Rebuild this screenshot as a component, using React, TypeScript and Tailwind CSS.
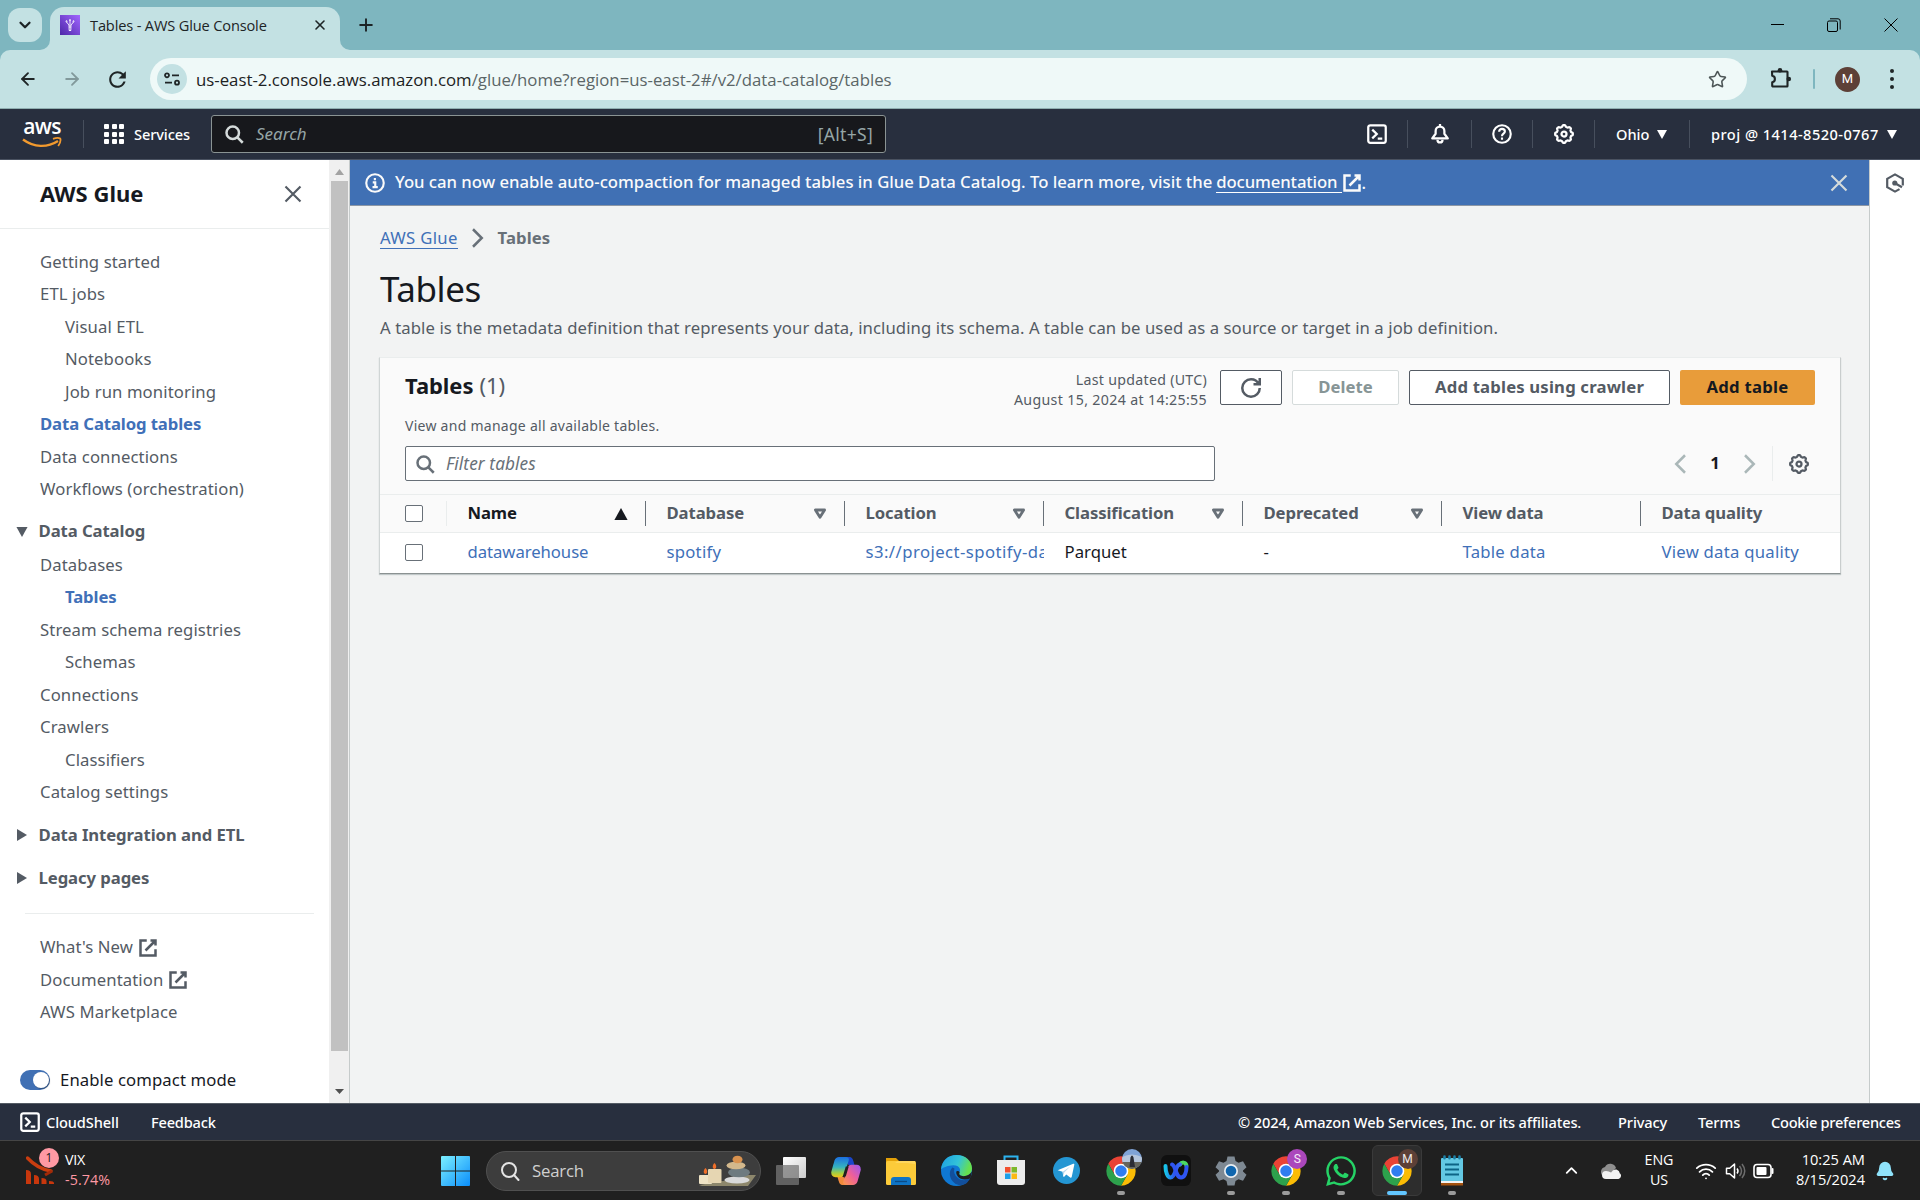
import React from "react";
import {
  ArrowLeft,
  ArrowRight,
  Bell,
  ChevronDown,
  ChevronUp,
  Plus,
  Star,
  Wifi,
  X,
} from "lucide-react";
import { FaWhatsapp } from "react-icons/fa";
import { MdRefresh } from "react-icons/md";

type IconProps = { className?: string };

const Stroke = ({
  className = "size-5",
  children,
  w = 2,
}: IconProps & { children: React.ReactNode; w?: number }) => (
  <svg viewBox="0 0 16 16" className={className + " shrink-0"} fill="none" stroke="currentColor" strokeWidth={w}>
    {children}
  </svg>
);

const External = ({ className }: IconProps) => (
  <Stroke className={className}>
    <path d="M10 2h4v4M6 10l8-8M14 9v5H2V2h5" />
  </Stroke>
);
const Search = ({ className }: IconProps) => (
  <Stroke className={className}>
    <circle cx="7" cy="7" r="5" />
    <path d="m15 15-4.500-4.500" />
  </Stroke>
);
const Close = ({ className }: IconProps) => (
  <Stroke className={className} w={1.7}>
    <path d="m2 2 12 12M14 2 2 14" />
  </Stroke>
);
const Terminal = ({ className }: IconProps) => (
  <Stroke className={className} w={1.8}>
    <rect x="1" y="1" width="14" height="14" rx="1.6" />
    <path d="m4.200 4.500 3.600 3.500-3.600 3.500M8.600 11.600h3.600" />
  </Stroke>
);
const Angle = ({ className, left }: IconProps & { left?: boolean }) => (
  <Stroke className={className}>
    <path d={left ? "m12 1-7 7 7 7" : "m4 1 7 7-7 7"} />
  </Stroke>
);
const gearPath =
  Array.from({ length: 96 }, (_, i) => {
    const a = (i / 96) * Math.PI * 2;
    const r = 6.45 + 0.65 * Math.tanh(2 * Math.cos(8 * a));
    return (i ? "L" : "M") + (8 + r * Math.cos(a)).toFixed(2) + " " + (8 + r * Math.sin(a)).toFixed(2);
  }).join("") + "Z";
const Gear = ({ className }: IconProps) => (
  <Stroke className={className} w={1.8}>
    <path d={gearPath} />
    <circle cx="8" cy="8" r="2" />
  </Stroke>
);
const Caret = ({ className = "" }: IconProps) => (
  <svg viewBox="0 0 10 9" className={className + " shrink-0"} fill="currentColor">
    <path d="M0 0h10L5 9z" />
  </svg>
);
const SortHollow = () => (
  <svg viewBox="0 0 14 12" className="h-3 w-3.5 shrink-0 text-[#687078]" fill="none" stroke="currentColor" strokeWidth="2.8">
    <path d="M2.400 2h9.200L7 9.200z" strokeLinejoin="round" />
  </svg>
);
const SortUp = () => (
  <svg viewBox="0 0 14 12" className="h-3 w-3.5 shrink-0 text-[#16191f]" fill="currentColor">
    <path d="M7 0 13.600 12H.400z" />
  </svg>
);

/* ---------- browser window ---------- */

const GlueFavicon = () => (
  <svg viewBox="0 0 20 20" className="size-5 shrink-0">
    <defs>
      <linearGradient id="glue" x1="0" y1="1" x2="1" y2="0">
        <stop offset="0" stopColor="#4d27a8" />
        <stop offset="1" stopColor="#a166ff" />
      </linearGradient>
    </defs>
    <rect width="20" height="20" fill="url(#glue)" />
    <g stroke="#fff" fill="none" strokeWidth=".9">
      <path d="M6.500 7 9 10l.200 5.500M13.500 7 11 10l-.200 5.500M10 5v8M9 15.500h2" />
      <circle cx="6.500" cy="6.300" r=".6" />
      <circle cx="13.500" cy="6.300" r=".6" />
      <circle cx="10" cy="5" r=".5" />
    </g>
  </svg>
);

const TabStrip = () => (
  <div className="flex h-[50px] bg-[#7eb6bf] text-[#1d2426]">
    <div className="mt-2 ml-2 flex h-[34px] w-[34px] items-center justify-center rounded-xl bg-[#c3e1e3]">
      <ChevronDown className="size-[18px]" strokeWidth={3} />
    </div>
    <svg viewBox="0 0 10 10" className="ml-[-2px] h-2.5 w-2.5 self-end">
      <path d="M0 10A10 10 0 0 0 10 0V10z" fill="#c3e1e3" />
    </svg>
    <div className="mt-[7px] flex w-[290px] items-center rounded-t-[14px] bg-[#c3e1e3] pb-[7px] pl-2.5">
      <GlueFavicon />
      <span className="mt-0.5 ml-2.5 w-[215px] font-['Open_Sans',sans-serif] text-[14.6px] tracking-[-0.15px] whitespace-nowrap">
        Tables - AWS Glue Console
      </span>
      <X className="ml-[7px] size-4" strokeWidth={2.4} />
    </div>
    <svg viewBox="0 0 10 10" className="h-2.5 w-2.5 self-end">
      <path d="M10 10A10 10 0 0 1 0 0V10z" fill="#c3e1e3" />
    </svg>
    <Plus className="mt-[15px] ml-[6px] size-5" strokeWidth={2.3} />
    <div className="ml-auto flex h-[49px] items-center text-black">
      <div className="h-px w-[13px] bg-black" />
      <svg viewBox="0 0 14 14" className="mr-[52px] ml-[43px] size-3.5" fill="none" stroke="currentColor">
        <rect x=".5" y="3" width="10" height="10.5" rx="1.5" />
        <path d="M3 .8h8a2.200 2.200 0 0 1 2.200 2.200v8.500" />
      </svg>
      <svg viewBox="0 0 14 14" className="mr-[22px] ml-[-9px] size-3.5" fill="none" stroke="currentColor">
        <path d="m.5.5 13 13M13.500.5l-13 13" />
      </svg>
    </div>
  </div>
);

const Toolbar = () => (
  <div className="bg-[#7eb6bf]">
    <div className="flex h-[59px] items-center rounded-t-[10px] border-b border-[#8faeb0] bg-[#c3e1e3] text-[#1f2526]">
      <ArrowLeft className="ml-[18px] size-5" strokeWidth={2.2} />
      <ArrowRight className="ml-6 size-5 text-[#82999b]" strokeWidth={2.2} />
      <MdRefresh className="ml-[23px] size-[25px]" />
      <div className="ml-5 flex h-[42px] w-[1597px] items-center rounded-full bg-[#eff9f8] pl-[7px]">
        <div className="flex size-[30px] items-center justify-center rounded-full bg-[#c3e1e3]">
          <svg viewBox="0 0 16 16" className="size-4" fill="none" stroke="currentColor" strokeWidth="1.8">
            <circle cx="3" cy="4.3" r="2" />
            <path d="M8 4.300h7M1 11.700h7" />
            <circle cx="13" cy="11.7" r="2" />
          </svg>
        </div>
        <span className="mt-px ml-[9px] font-['Open_Sans',sans-serif] text-[16.8px] tracking-[0px] whitespace-nowrap text-[#5b6667]">
          <span className="text-[#1c2223]">us-east-2.console.aws.amazon.com</span>
          /glue/home?region=us-east-2#/v2/data-catalog/tables
        </span>
        <Star className="mr-5 ml-auto size-[19px] text-[#4d5657]" strokeWidth={2} />
      </div>
      <svg viewBox="0 0 22 22" className="mb-0.5 ml-[23px] size-[22px] shrink-0">
        <path
          d="M2 4.500h15a.5.5 0 0 1 .5.5v14a.5.5 0 0 1-.5.5H3a.8.8 0 0 1-.8-.8v-3.500c3.600-.5 3.600-5.900 0-6.400z"
          fill="none"
          stroke="currentColor"
          strokeWidth="2.1"
          strokeLinejoin="round"
        />
        <circle cx="10" cy="3.200" r="2.300" fill="currentColor" />
        <circle cx="18.800" cy="12" r="2.300" fill="currentColor" />
      </svg>
      <div className="ml-[21px] h-5 w-0.5 rounded bg-[#7eb6bf]" />
      <div className="ml-5 flex size-[25px] items-center justify-center rounded-full bg-[#5d4037] font-[Roboto,sans-serif] text-[13px] text-white">
        M
      </div>
      <div className="ml-[30px] flex flex-col gap-1">
        <i className="size-1 rounded-full bg-current" />
        <i className="size-1 rounded-full bg-current" />
        <i className="size-1 rounded-full bg-current" />
      </div>
    </div>
  </div>
);

/* ---------- console header ---------- */

const Divider = ({ className = "" }: IconProps) => <div className={"h-7 w-px shrink-0 bg-[#474f5d] " + className} />;

const ConsoleHeader = () => (
  <div className="flex h-[51px] items-center border-b border-[#4a5261] bg-[#282f3e] text-white">
    <div className="ml-[22px] flex w-10 flex-col items-center">
      <span className="h-[17px] font-['Open_Sans',sans-serif] text-[21px] leading-[13px] font-semibold tracking-[-0.6px]">
        aws
      </span>
      <svg viewBox="0 0 40 12" className="h-3 w-10" fill="none" stroke="#f29a2e" strokeWidth="2.4">
        <path d="M1 2.500c11 8 24 8.500 35 1.500" />
        <path d="M31 1.800c3-1 6-1 7.200-.3.700 1.500 0 4.500-2 7.500" strokeWidth="1.800" />
      </svg>
    </div>
    <Divider className="ml-[21px]" />
    <div className="ml-5 grid grid-cols-3 gap-x-[2.5px] gap-y-[2.5px]">
      {Array.from({ length: 9 }, (_, i) => (
        <i key={i} className="size-[5px] rounded-[1px] bg-white" />
      ))}
    </div>
    <span className="mt-0.5 ml-2.5 w-[77px] text-[14.6px] font-medium tracking-[-0.1px]">Services</span>
    <div className="flex h-[38px] w-[675px] items-center rounded-[3px] border border-[#8a9393] bg-[#17181c] px-3">
      <Search className="size-5 text-[#d5dbdb]" />
      <span className="ml-3 text-[17px] tracking-[0px] text-[#95a5a6] italic">Search</span>
      <span className="ml-auto text-[17.5px] tracking-[0.3px] text-[#95a5a6]">[Alt+S]</span>
    </div>
    <Terminal className="ml-[481px] size-5" />
    <Divider className="ml-5" />
    <Stroke className="ml-[22px] size-5" w={1.8}>
      <path d="M1.800 11.500h12.400L11.500 7.800V5.500a3.500 3.500 0 0 0-7 0v2.300z" strokeLinejoin="round" />
      <path d="M8 2V0M6 12.500c0 3 4 3 4 0" />
    </Stroke>
    <Divider className="ml-[21px]" />
    <Stroke className="ml-5 size-5" w={1.7}>
      <circle cx="8" cy="8" r="7" />
      <path d="M5.700 6.200C5.700 3 10.300 3.200 10.300 6c0 1.800-2.300 1.700-2.300 3.700M8 10.800v1.700" />
    </Stroke>
    <Divider className="ml-5" />
    <Gear className="ml-[21px] size-5" />
    <Divider className="ml-5" />
    <span className="mt-0.5 ml-[21px] w-[41px] text-[14.6px] font-medium">Ohio</span>
    <Caret className="h-[9px] w-2.5" />
    <Divider className="ml-[22px]" />
    <span className="mt-0.5 ml-[21px] w-[176px] text-[14.6px] font-medium tracking-[0.46px] whitespace-nowrap">
      proj @ 1414-8520-0767
    </span>
    <Caret className="h-[9px] w-2.5" />
  </div>
);

/* ---------- side navigation ---------- */

type Item = { label: string; sub?: boolean; active?: boolean; ext?: boolean };

const topItems: Item[] = [
  { label: "Getting started" },
  { label: "ETL jobs" },
  { label: "Visual ETL", sub: true },
  { label: "Notebooks", sub: true },
  { label: "Job run monitoring", sub: true },
  { label: "Data Catalog tables", active: true },
  { label: "Data connections" },
  { label: "Workflows (orchestration)" },
];
const catalogItems: Item[] = [
  { label: "Databases" },
  { label: "Tables", sub: true, active: true },
  { label: "Stream schema registries" },
  { label: "Schemas", sub: true },
  { label: "Connections" },
  { label: "Crawlers" },
  { label: "Classifiers", sub: true },
  { label: "Catalog settings" },
];
const linkItems: Item[] = [
  { label: "What's New", ext: true },
  { label: "Documentation", ext: true },
  { label: "AWS Marketplace" },
];

const NavList = ({ items }: { items: Item[] }) => (
  <ul>
    {items.map((it) => (
      <li
        key={it.label}
        className={
          "flex h-[32.5px] items-center " +
          (it.sub ? "pl-[65px] " : "pl-10 ") +
          (it.active ? "font-bold tracking-[-0.1px] text-[#4070b8]" : "text-[#545b64]")
        }
      >
        {it.label}
        {it.ext && <External className="mt-0.5 ml-[5px] size-5" />}
      </li>
    ))}
  </ul>
);

const Section = ({ label, open }: { label: string; open?: boolean }) => (
  <div className="flex h-[43px] items-center font-bold tracking-[-0.08px] text-[#545b64]">
    <span className="flex w-[38.5px] pl-4">
      {open ? (
        <Caret className="mt-0.5 h-2.5 w-3" />
      ) : (
        <svg viewBox="0 0 10 12" className="ml-px h-3 w-2.5" fill="currentColor">
          <path d="M0 0v12l10-6z" />
        </svg>
      )}
    </span>
    {label}
  </div>
);

const Sidebar = () => (
  <div className="flex w-[350px] shrink-0 border-r border-[#c6cbcb] bg-white text-[16.7px] tracking-[0.1px]">
    <div className="flex w-[329px] flex-col">
      <div className="flex h-[69px] items-center justify-between border-b border-[#eaeded] pr-[26px] pl-10">
        <span className="mb-0.5 text-[22px] font-bold tracking-[0px] text-[#16191f]">AWS Glue</span>
        <Close className="size-5 text-[#545b64]" />
      </div>
      <div className="pt-4">
        <NavList items={topItems} />
        <div className="pt-[4.5px]">
          <Section label="Data Catalog" open />
        </div>
        <div className="mt-[-4.5px] pb-[5.5px]">
          <NavList items={catalogItems} />
        </div>
        <Section label="Data Integration and ETL" />
        <Section label="Legacy pages" />
        <div className="mt-[13px] mr-[15px] mb-[17px] ml-[25px] h-px bg-[#eaeded]" />
        <NavList items={linkItems} />
      </div>
      <div className="mt-auto mb-[9px] flex items-center pl-5">
        <div className="flex h-5 w-[30px] items-center justify-end rounded-full bg-[#4070b4] px-px">
          <div className="size-4 rounded-full bg-white shadow-[1px_1px_1px_rgba(0,0,0,0.3)]" />
        </div>
        <span className="mb-0.5 ml-2.5 text-[#16191f]">Enable compact mode</span>
      </div>
    </div>
    <div className="flex w-5 flex-col items-center bg-[#f0f0f0]">
      <svg viewBox="0 0 9 6" className="mt-[9px] mb-[6px] h-1.5 w-[9px]" fill="#a3a3a3">
        <path d="M4.500 0 9 6H0z" />
      </svg>
      <div className="ml-px h-[870px] w-[17px] bg-[#c1c1c1]" />
      <svg viewBox="0 0 9 5" className="mt-[38px] h-[5px] w-[9px]" fill="#505050">
        <path d="M4.500 5 9 0H0z" />
      </svg>
    </div>
  </div>
);

/* ---------- main content ---------- */

const Banner = () => (
  <div className="flex h-[46px] items-center border-b border-[#8d97a5] bg-[#4070b4] pr-5 pl-[15px] text-[16.7px] font-medium text-[#fafafa]">
    <Stroke className="size-5" w={1.7}>
      <circle cx="8" cy="8" r="7" />
      <path d="M6 11.300h4.200M6.200 7.500h2v4M7.900 4v1.800" />
    </Stroke>
    <span className="mb-0.5 ml-[10px] tracking-[-0.01px] whitespace-nowrap">
      You can now enable auto-compaction for managed tables in Glue Data Catalog. To learn more, visit the
    </span>
    <span className="ml-1 border-b border-white pr-1 leading-5 tracking-[-0.1px]">documentation</span>
    <External className="size-5" />
    <span>.</span>
    <Close className="ml-auto size-5 text-[#d5dbdb]" />
  </div>
);

const columns = [
  { label: "Name", cell: "datawarehouse", link: true, sort: "up", track: "tracking-[-0.05px]" },
  { label: "Database", cell: "spotify", link: true, sort: "none", track: "tracking-[0.25px]" },
  { label: "Location", cell: "s3://project-spotify-da", link: true, sort: "none", track: "tracking-[0.45px]" },
  { label: "Classification", cell: "Parquet", sort: "none", track: "tracking-[0.05px]" },
  { label: "Deprecated", cell: "-", sort: "none", track: "" },
  { label: "View data", cell: "Table data", link: true, track: "tracking-[0.25px]" },
  { label: "Data quality", cell: "View data quality", link: true, track: "tracking-[0.25px]" },
];

const Checkbox = () => <div className="ml-[25px] size-[17.5px] shrink-0 rounded-[2px] border border-[#687078] bg-white" />;

const gridCols = "grid grid-cols-[67px_199px_199px_199px_199px_199px_199px_1fr]";

const TablesCard = () => (
  <div className="mt-[17px] ml-[-1px] h-[217px] w-[1462px] border border-t-[#eaeded] border-r-[#c9cdcd] border-b-[#8b9292] border-l-[#d0d5d5] bg-white shadow-[0_1px_1px_rgba(0,28,36,0.2)]">
    <div className="h-[136px] bg-[#fafafa] pr-[25px] pl-[25px]">
      <div className="flex h-[88px] pt-3">
        <div>
          <div className="mt-[-1px] flex h-8 items-center text-[22px] font-bold tracking-[-0.05px] text-[#16191f]">
            Tables<span className="ml-1.5 font-normal text-[#545b64]">(1)</span>
          </div>
          <div className="mt-[15px] text-[14px] leading-5 tracking-[0.27px] text-[#545b64]">
            View and manage all available tables.
          </div>
        </div>
        <div className="ml-auto flex text-[16.7px] font-bold text-[#545b64]">
          <div className="text-right text-[14.2px] leading-5 font-normal tracking-[0.28px]">
            Last updated (UTC)
            <br />
            <span className="tracking-[0.34px]">August 15, 2024 at 14:25:55</span>
          </div>
          <div className="ml-[13px] flex h-[35px] w-[62px] items-center justify-center rounded-[2px] border border-[#545b64] bg-white">
            <Stroke className="size-5">
              <path d="M10 5h5V0M15 8c0 3.866-3.134 7-7 7s-7-3.134-7-7 3.134-7 7-7c2.790 0 5.200 1.633 6.327 4" />
            </Stroke>
          </div>
          <div className="ml-2.5 flex h-[35px] w-[107px] items-center justify-center rounded-[2px] border border-[#d5dbdb] bg-white pb-0.5 text-[#879596]">
            Delete
          </div>
          <div className="ml-2.5 flex h-[35px] w-[261px] items-center justify-center rounded-[2px] border border-[#545b64] bg-white pb-0.5 tracking-[0.18px]">
            Add tables using crawler
          </div>
          <div className="ml-2.5 flex h-[35px] w-[135px] items-center justify-center rounded-[2px] bg-[#e89c3a] pb-0.5 tracking-[0.25px] text-[#16191f]">
            Add table
          </div>
        </div>
      </div>
      <div className="flex h-[35px] items-center">
        <div className="flex h-[35px] w-[810px] items-center rounded-[2px] border border-[#687078] bg-white pl-[9px]">
          <Search className="size-5 text-[#687078]" />
          <span className="ml-[11px] text-[17.2px] tracking-[0.1px] text-[#687078] italic">Filter tables</span>
        </div>
        <Angle left className="ml-auto size-5 text-[#aab7b8]" />
        <span className="mb-0.5 w-[50px] text-center text-[16.7px] font-bold text-[#16191f]">1</span>
        <Angle className="size-5 text-[#aab7b8]" />
        <div className="ml-3 h-[35px] w-px bg-[#eaeded]" />
        <Gear className="mr-[6px] ml-4 size-5 text-[#545b64]" />
      </div>
    </div>
    <div className={gridCols + " h-[39px] border-t border-b border-[#eaeded] bg-[#fafafa]"}>
      <div className="flex items-center justify-between">
        <Checkbox />
        <div className="h-[25px] w-px bg-[#eaeded]" />
      </div>
      {columns.map((c, i) => (
        <div key={c.label} className="flex items-center justify-between">
          <span
            className={
              "pb-0.5 pl-[20.5px] text-[16.7px] font-bold tracking-[-0.1px] " +
              (i === 0 ? "text-[#16191f]" : "text-[#545b64]")
            }
          >
            {c.label}
          </span>
          <div className="flex items-center">
            {c.sort === "up" && <SortUp />}
            {c.sort === "none" && <SortHollow />}
            {i < 6 && <div className="ml-[17px] h-[25px] w-px bg-[#687078]" />}
          </div>
        </div>
      ))}
    </div>
    <div className={gridCols + " h-10"}>
      <div className="flex items-center pb-px">
        <Checkbox />
      </div>
      {columns.map((c) => (
        <div key={c.label} className="flex min-w-0 items-center overflow-hidden pb-[3px]">
          <span
            className={
              "pl-[20.5px] text-[16.7px] whitespace-nowrap " + c.track + " " + (c.link ? "text-[#4070b8]" : "text-[#16191f]")
            }
          >
            {c.cell}
          </span>
        </div>
      ))}
    </div>
  </div>
);

const Main = () => (
  <div className="flex w-[1519px] flex-col bg-[#f2f3f3]">
    <Banner />
    <div className="pl-[30px]">
      <div className="mt-5 flex h-6 items-center text-[16.7px]">
        <span className="border-b border-[#4070b8] leading-[21px] tracking-[0.3px] text-[#4070b8]">AWS Glue</span>
        <Angle className="ml-[10px] size-5 text-[#687078]" />
        <span className="ml-2.5 font-bold tracking-[0.1px] text-[#687078]">Tables</span>
      </div>
      <h1 className="mt-[19px] h-10 text-[35px] leading-10 tracking-[-0.4px] text-[#16191f]">Tables</h1>
      <p className="mt-[7px] text-[16.7px] leading-6 tracking-[0.085px] whitespace-nowrap text-[#545b64]">
        A table is the metadata definition that represents your data, including its schema. A table can be used as a source or
        target in a job definition.
      </p>
      <TablesCard />
    </div>
  </div>
);

const RightRail = () => (
  <div className="flex flex-1 justify-center border-l border-[#c6cbcb] bg-white pt-[13px]">
    <svg viewBox="0 0 20 20" className="size-5 text-[#545b64]" fill="none" stroke="currentColor" strokeWidth="2.2">
      <path d="M17.800 12.500V5.800L10 1.400 2.200 5.800v8.400L10 18.600l4.500-2.500" />
      <circle cx="9.800" cy="10" r="2.600" fill="currentColor" stroke="none" />
      <path d="m10.500 10.500 6.500 3.700" />
    </svg>
  </div>
);

const ConsoleFooter = () => (
  <div className="flex h-[38px] items-center border-t border-b border-t-[#545b64] border-b-[#454545] bg-[#282f3e] text-[14.6px] font-medium tracking-[-0.1px] text-white">
    <Terminal className="ml-5 size-5" />
    <span className="mt-0.5 ml-1.5 w-[105px]">CloudShell</span>
    <span className="mt-0.5 tracking-[-0.2px]">Feedback</span>
    <span className="mt-0.5 ml-auto w-[380px] tracking-[-0.12px] whitespace-nowrap">
      © 2024, Amazon Web Services, Inc. or its affiliates.
    </span>
    <span className="mt-0.5 w-20">Privacy</span>
    <span className="mt-0.5 w-[73px]">Terms</span>
    <span className="mt-0.5 w-[149px] tracking-[-0.26px] whitespace-nowrap">Cookie preferences</span>
  </div>
);

/* ---------- taskbar ---------- */

const ChromeLogo = () => (
  <svg viewBox="0 0 48 48" className="size-[32px]">
    <path d="M4.950 13A22 22 0 0 1 43.050 13H24L14.470 29.500z" fill="#ea4335" />
    <path d="M43.050 13A22 22 0 0 1 24 46l9.530-16.500L24 13z" fill="#fbbc05" />
    <path d="M24 46A22 22 0 0 1 4.950 13l9.520 16.500h19.060z" fill="#2da14c" />
    <circle cx="24" cy="24" r="11" fill="#fff" />
    <circle cx="24" cy="24" r="8.600" fill="#2f7df0" />
  </svg>
);

const TaskApp = ({
  children,
  running,
  active,
  badge,
}: {
  children: React.ReactNode;
  running?: boolean;
  active?: boolean;
  badge?: React.ReactNode;
}) => (
  <div
    className={
      "relative flex h-[51px] w-[50px] shrink-0 items-center justify-center rounded-md " +
      (active ? "border border-[#3a3a3a] bg-[#2d2d2d]" : "border border-transparent")
    }
  >
    {children}
    {badge && <div className="absolute top-[3px] left-[25px] size-5">{badge}</div>}
    {active && <div className="absolute bottom-0 h-1 w-5 rounded-full bg-[#62c6ff]" />}
    {running && <div className="absolute bottom-0 h-1 w-2 rounded-full bg-[#9b9b9b]" />}
  </div>
);

const Letter = ({ c, className }: { c: string; className: string }) => (
  <div className={"flex size-5 items-center justify-center rounded-full font-[Roboto,sans-serif] text-[12px] text-white/90 " + className}>
    {c}
  </div>
);

const WindowsLogo = () => (
  <svg viewBox="0 0 29 30" className="h-[30px] w-[29px] shrink-0">
    <defs>
      <linearGradient id="win" x1="0" y1="0" x2="1" y2="1">
        <stop offset="0" stopColor="#7cf0ff" />
        <stop offset="1" stopColor="#0a8dfb" />
      </linearGradient>
    </defs>
    <path
      d="M0 1a1 1 0 0 1 1-1h13v14.500H0zM15 0h13a1 1 0 0 1 1 1v13.500H15zM0 15.500h14V30H1a1 1 0 0 1-1-1zM15 15.500h14V29a1 1 0 0 1-1 1H15z"
      fill="url(#win)"
    />
  </svg>
);

const Stones = () => (
  <svg viewBox="0 0 57 32" className="h-8 w-[57px]">
    <path d="M0 30 30 25l6-5 21 0-8 11H3z" fill="#8d876c" />
    <rect x="0" y="20" width="13" height="9" rx="1" fill="#efe4c6" />
    <rect x="9" y="14" width="13.500" height="14" rx="1" fill="#e6d6b2" />
    <path d="M6.500 13c3 3 1.500 6 0 6s-3-3 0-6zM15.500 8c3 3 1.500 6 0 6s-3-3 0-6z" fill="#f0702a" />
    <ellipse cx="38" cy="25" rx="12.500" ry="3.500" fill="#d9dadb" />
    <ellipse cx="40" cy="17.500" rx="11" ry="4.800" fill="#6e7b80" />
    <ellipse cx="37" cy="10.500" rx="9.500" ry="3.800" fill="#d3b88c" />
    <ellipse cx="38.500" cy="4.500" rx="5" ry="3.800" fill="#d9924f" />
  </svg>
);

const Taskbar = () => (
  <div className="flex h-[59px] items-center bg-[#202020] font-['Open_Sans',sans-serif] text-white">
    <div className="relative mb-0.5 ml-[26px] h-7 w-[39px]">
      <svg viewBox="0 0 28 28" className="size-7" fill="none">
        <path d="M1.500 2C8 9 15 13.500 25 15" stroke="#c93d10" strokeWidth="3.400" strokeLinecap="round" />
        <path d="m19 19 7-4" stroke="#a32a08" strokeWidth="3" />
        <path d="M0 14q5 0 5 4v10H0zM8 19q5 0 5 4v5H8zM15.500 22q5 0 5 3v3h-5zM23 25q5 0 5 2v1h-5z" fill="#c8370d" />
      </svg>
      <div className="absolute top-[-8px] left-[13px] flex size-5 items-center justify-center rounded-full bg-[#ff99a4] text-[12px] text-[#202020]">
        1
      </div>
    </div>
    <div className="mb-0.5 w-[376px] text-[14.3px] leading-5 tracking-[-0.3px]">
      VIX
      <div className="tracking-[0.05px] text-[#ff99a4]">-5.74%</div>
    </div>
    <WindowsLogo />
    <div className="ml-4 flex h-10 w-[275px] shrink-0 items-center rounded-full border border-[#505050] bg-[#3d3d3d] pr-1 pl-[13px]">
      <svg viewBox="0 0 20 20" className="size-5" fill="none" stroke="#e4e4e4" strokeWidth="2">
        <circle cx="9" cy="9" r="7" />
        <path d="m14 14 4.500 5" strokeLinecap="round" />
      </svg>
      <span className="ml-3 text-[16.8px] tracking-[-0.2px] text-[#d0d0d0]">Search</span>
      <div className="ml-auto">
        <Stones />
      </div>
    </div>
    <div className="ml-[5px] flex shrink-0 items-center gap-[5.05px]">
      <TaskApp>
        <svg viewBox="0 0 30 30" className="size-[30px]">
          <defs>
            <linearGradient id="tv" x1="0" y1="0" x2="1" y2="1">
              <stop offset="0" stopColor="#fff" />
              <stop offset="1" stopColor="#ccc" />
            </linearGradient>
          </defs>
          <rect x="7" y="1" width="23" height="21" rx="1" fill="url(#tv)" />
          <rect x="0" y="9" width="23" height="20" rx="1" fill="#777" fillOpacity=".75" />
        </svg>
      </TaskApp>
      <TaskApp>
        <svg viewBox="0 0 30 30" className="size-[30px]">
          <defs>
            <linearGradient id="cpa" x1="0" y1="0" x2="0" y2="1">
              <stop offset="0" stopColor="#1b6fe0" />
              <stop offset=".5" stopColor="#35b3c0" />
              <stop offset=".8" stopColor="#a6cf3f" />
              <stop offset="1" stopColor="#f0c419" />
            </linearGradient>
            <linearGradient id="cpb" x1="1" y1="0" x2="0" y2="1">
              <stop offset="0" stopColor="#9a57f2" />
              <stop offset=".5" stopColor="#ee5f9a" />
              <stop offset="1" stopColor="#fb9a4a" />
            </linearGradient>
          </defs>
          <path d="M11 1h7c3 0 3.500 1.500 4.500 4.500l1 3.500h-6z" fill="#1b45c9" />
          <path d="M19 29h-7c-3 0-3.500-1.500-4.500-4.500l-1-3.500h6z" fill="#f08a3c" />
          <path d="M8 1h7c2.500 0 3.200 1.500 2.700 3.500L13.500 18c-.700 2-2 3.200-4 3.200H4.500C.8 21.200-.3 18 .5 15l3-10.500C4.200 2.300 6 1 8 1z" fill="url(#cpa)" />
          <path d="M22 29h-7c-2.500 0-3.200-1.500-2.700-3.500L16.500 12c.700-2 2-3.200 4-3.200h5c3.700 0 4.800 3.200 4 6.200l-3 10.500c-.700 2.200-2.500 3.500-4.500 3.500z" fill="url(#cpb)" />
          <path d="M15.500 11.500h.9L14 19.500h-.9z" stroke="#202020" strokeWidth="2" />
        </svg>
      </TaskApp>
      <TaskApp>
        <svg viewBox="0 0 30 28" className="h-7 w-[30px]">
          <path d="M0 1h10l3 3v6H0z" fill="#e2a008" />
          <rect y="4" width="30" height="24" rx="1.500" fill="#fccb3a" />
          <path d="M12 4h17v3l-8-1H9z" fill="#ffd75e" />
          <path d="M5 28v-5a3 3 0 0 1 3-3h14a3 3 0 0 1 3 3v5z" fill="#0f74c5" />
          <path d="M9 24.500h12" stroke="#0a4a85" strokeWidth="1.300" />
        </svg>
      </TaskApp>
      <TaskApp>
        <svg viewBox="0 0 30 30" className="size-[31px]">
          <defs>
            <linearGradient id="eda" x1="0" y1="0" x2="1" y2=".3">
              <stop offset="0" stopColor="#1b9de2" />
              <stop offset=".6" stopColor="#33c3d8" />
              <stop offset="1" stopColor="#66e04f" />
            </linearGradient>
          </defs>
          <circle cx="15" cy="15" r="15" fill="#0f78d4" />
          <path d="M0 14C1 5 7 0 15 0c9 0 15 6 15 13 0 5-4 7.500-8 7.500-3.500 0-5.500-1.500-4-3.500 1.300-2 .500-7-6-7C6 10 1 13 0 14z" fill="url(#eda)" />
          <path d="M11 12c-4 4-3 11 2 15 3 2.500 8 3 12 0l3-4c-4 2-9 2-12-1-3-2.500-4-6-3-9z" fill="#124f9c" />
          <path d="M28.500 22.500C24 24.500 19 24 16.500 21c-1.500-1.800-2-3.500-1.700-5 .7-1 3.200-.5 3.200 1-1 2 .5 3.500 4 3.500 3 0 6-1.500 8-4.500z" fill="#202020" />
        </svg>
      </TaskApp>
      <TaskApp>
        <svg viewBox="0 0 30 31" className="h-[31px] w-[30px]">
          <path d="M8.500 8V1.500h13V8" fill="none" stroke="#2cb3ef" strokeWidth="2" />
          <path d="M1 5h28v22a3 3 0 0 1-3 3H4a3 3 0 0 1-3-3z" fill="#ececec" />
          <path d="M9 12h5.500v5.500H9z" fill="#f1502f" />
          <path d="M15.500 12H21v5.500h-5.500z" fill="#7db82a" />
          <path d="M9 18.500h5.500V24H9z" fill="#1c9fe8" />
          <path d="M15.500 18.500H21V24h-5.500z" fill="#fbb813" />
        </svg>
      </TaskApp>
      <TaskApp>
        <svg viewBox="0 0 26 26" className="size-[27px]">
          <circle cx="13" cy="13" r="13" fill="#2496d3" />
          <path d="M4.500 12.800 19.500 6.500c.700-.2 1.200.2 1 1l-2.500 11.700c-.200.800-.800 1-1.400.600l-3.800-2.900-2 2c-.500.400-.900.200-1-.400l-.600-4.200z" fill="#fff" />
          <path d="m9.300 14.200 7.300-5-5.800 5.800-.700 3.400z" fill="#b9d9ee" />
        </svg>
      </TaskApp>
      <TaskApp
        running
        badge={
          <svg viewBox="0 0 20 20" className="size-5">
            <clipPath id="av">
              <circle cx="10" cy="10" r="10" />
            </clipPath>
            <g clipPath="url(#av)">
              <path d="M0 0h20v20H0z" fill="#7fa3d6" />
              <path d="M0 8q10-5 20 0v5H0z" fill="#b5c6dd" />
              <path d="M0 13h20v7H0z" fill="#66655c" />
              <path d="M8.500 8.500q1.500-4 3 0L13 18H7.500z" fill="#2b2c34" />
            </g>
          </svg>
        }
      >
        <ChromeLogo />
      </TaskApp>
      <TaskApp>
        <svg viewBox="0 0 30 31" className="h-[31px] w-[30px]">
          <defs>
            <linearGradient id="wx" x1="0" y1="0" x2="1" y2="0">
              <stop offset="0" stopColor="#17c4e8" />
              <stop offset=".6" stopColor="#2d55f0" />
              <stop offset="1" stopColor="#3b6cf5" />
            </linearGradient>
          </defs>
          <rect width="30" height="31" rx="6" fill="#101010" />
          <g fill="none" strokeWidth="4" strokeLinecap="round">
            <path d="M19 9.500c1.500-2.500 6-3 6.500 1.500" stroke="#4bd865" />
            <path d="M4.500 11c0 6 2 11.500 5 11.500 4 0 4.500-6 6-9.500 1-2.500 2-3.500 3.500-3.500" stroke="url(#wx)" />
            <path d="M11 9.500c4 1 3.500 13 9 13 3.500 0 5.500-5 5.500-10.500" stroke="#2f55f2" />
          </g>
        </svg>
      </TaskApp>
      <TaskApp running>
        <svg viewBox="0 0 32 32" className="size-8">
          <path
            d="M12.500 1.500h7l1 4.500 3 1.700 4.500-1.400 3.500 6-3.500 3.200v1l3.500 3.200-3.500 6-4.500-1.400-3 1.700-1 4.500h-7l-1-4.500-3-1.700L4 25.700l-3.500-6L4 16.500v-1L.500 12.300l3.500-6 4.500 1.400 3-1.700z"
            fill="#7e8993"
          />
          <circle cx="16" cy="16" r="7" fill="#e9eef2" />
          <circle cx="16" cy="16" r="5.300" fill="#1066ae" />
        </svg>
      </TaskApp>
      <TaskApp running badge={<Letter c="S" className="bg-[#ab47bc]" />}>
        <ChromeLogo />
      </TaskApp>
      <TaskApp running>
        <FaWhatsapp className="size-[34px] text-[#25d366]" />
      </TaskApp>
      <TaskApp active badge={<Letter c="M" className="bg-[#5d4037]" />}>
        <ChromeLogo />
      </TaskApp>
      <TaskApp running>
        <svg viewBox="0 0 22 31" className="h-[31px] w-[22px]">
          <rect y="3" width="22" height="27" rx="1" fill="#63c8e3" />
          <path d="M0 26h22v2H0z" fill="#f3f3f3" />
          <path d="M0 28h22v2.500H0z" fill="#a4520f" />
          <path d="M4 9.500h14M4 14.500h14M4 19.500h14" stroke="#0d6486" strokeWidth="2" />
          <path d="M3.500 1.500v1.800M8.500 1.500v1.800M13.500 1.500v1.800M18.500 1.500v1.800" stroke="#1b7fa5" strokeWidth="2.600" strokeLinecap="round" />
        </svg>
      </TaskApp>
    </div>
    <ChevronUp className="ml-[85px] size-[19px] shrink-0" strokeWidth={2.3} />
    <svg viewBox="0 0 20 18" className="ml-5 h-[18px] w-5 shrink-0">
      <path d="M1 13a5 5 0 0 1 3-8 6 6 0 0 1 11 1l-9 9z" fill="#8e8e8e" />
      <path d="M5 17a4 4 0 0 1 0-8q3 0 5 1.500Q12 7 15.500 7.500 19 9 18.500 11a3.300 3.300 0 0 1-1 6z" fill="#f3f3f3" />
    </svg>
    <div className="mb-px ml-6 shrink-0 text-center text-[14.3px] leading-5 tracking-[-0.1px]">
      ENG
      <br />
      US
    </div>
    <Wifi className="ml-[22px] size-[22px] shrink-0" strokeWidth={2} />
    <svg viewBox="0 0 22 20" className="ml-2 h-5 w-[22px] shrink-0" fill="none" stroke="#fff" strokeWidth="1.500">
      <path d="M1.500 7.200h3.200L9.500 3v14l-4.800-4.200H1.500z" strokeLinejoin="round" />
      <path d="M12 7.500q2 2.500 0 5" />
      <path d="M14.500 5q4 5 0 10M17 3q5.500 7 0 14" stroke="#6d6d6d" />
    </svg>
    <svg viewBox="0 0 22 16" className="ml-[6px] h-4 w-[22px] shrink-0">
      <rect x="1" y="1.500" width="17" height="13" rx="3" fill="none" stroke="#fff" strokeWidth="1.600" />
      <rect x="3.500" y="4" width="10" height="8" rx="1" fill="#fff" />
      <path d="M19.500 6v4" stroke="#fff" strokeWidth="2" strokeLinecap="round" />
    </svg>
    <div className="mb-[3px] ml-auto shrink-0 text-right text-[14.6px] leading-5 tracking-[0px]">
      10:25 AM
      <br />
      8/15/2024
    </div>
    <Bell className="mr-[25px] ml-2.5 size-5 shrink-0 text-[#8fe3fb]" fill="#8fe3fb" strokeWidth={2} />
  </div>
);

export default function App() {
  return (
    <div className="flex h-[1200px] w-[1920px] flex-col overflow-hidden bg-white font-['Noto_Sans',sans-serif]">
      <TabStrip />
      <Toolbar />
      <ConsoleHeader />
      <div className="flex h-[943px] shrink-0">
        <Sidebar />
        <Main />
        <RightRail />
      </div>
      <ConsoleFooter />
      <Taskbar />
    </div>
  );
}
